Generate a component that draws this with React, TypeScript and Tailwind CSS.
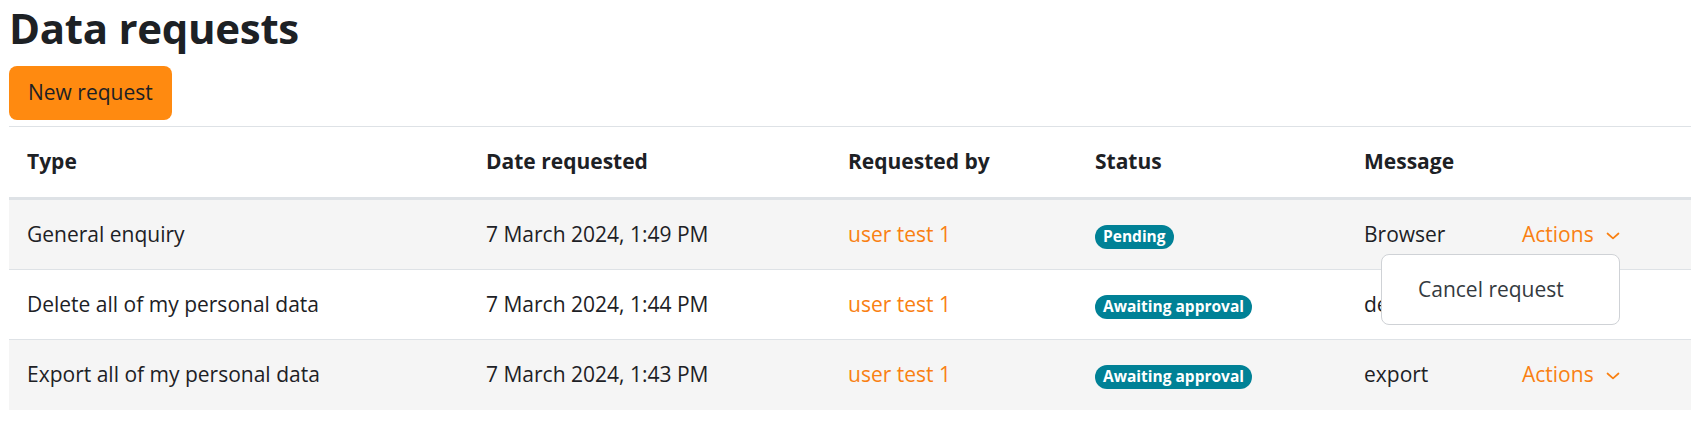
import React from "react";

const cols = "grid grid-cols-[459px_362px_247px_269px_158px_187px]";

function Chevron() {
  return (
    <svg width="14" height="8" viewBox="0 0 14 8" className="ml-[12px] mt-[2px]">
      <path d="M1.5 1.5 L7 6.3 L12.5 1.5" fill="none" stroke="#f98012" strokeWidth="1.7" strokeLinecap="round" strokeLinejoin="round" />
    </svg>
  );
}

function Badge({ text }: { text: string }) {
  return (
    <span className="inline-flex h-[24px] items-center rounded-full bg-[#008196] px-[8px] text-[15.5px] font-bold text-white leading-none">
      {text}
    </span>
  );
}

const rows = [
  { type: "General enquiry", date: "7 March 2024, 1:49 PM", status: "Pending", msg: "Browser", bg: "bg-[#f5f5f5]" },
  { type: "Delete all of my personal data", date: "7 March 2024, 1:44 PM", status: "Awaiting approval", msg: "delete", bg: "bg-white" },
  { type: "Export all of my personal data", date: "7 March 2024, 1:43 PM", status: "Awaiting approval", msg: "export", bg: "bg-[#f5f5f5]" },
];

export default function App() {
  return (
    <div className="min-h-[430px] bg-white px-[9px] text-[#1d2125]" style={{ fontFamily: '"Open Sans", "Noto Sans", sans-serif' }}>
      <h1 className="pt-0 text-[42px] font-bold leading-[56px] tracking-[-0.3px]">Data requests</h1>
      <div className="mt-[10px]">
        <button className="h-[54px] rounded-[8px] bg-[#ff8a10] px-[19px] text-[21px] text-[#1d2125]">New request</button>
      </div>
      <div className="relative mt-[6px] w-[1682px] border-t border-[#dee2e6]">
        <div className={`${cols} h-[73px] items-center border-b-[3px] border-[#dee2e6] text-[21px] font-bold`}>
          <div className="pl-[18px]">Type</div>
          <div className="pl-[18px]">Date requested</div>
          <div className="pl-[18px]">Requested by</div>
          <div className="pl-[18px]">Status</div>
          <div className="pl-[18px]">Message</div>
          <div></div>
        </div>
        {rows.map((r, i) => (
          <div key={i} className={`${cols} h-[70px] items-center text-[21px] ${r.bg} ${i < 2 ? "border-b border-[#dee2e6]" : ""}`}>
            <div className="pl-[18px]">{r.type}</div>
            <div className="pl-[18px]">{r.date}</div>
            <div className="pl-[18px] text-[#f98012]">user test 1</div>
            <div className="pl-[18px]"><Badge text={r.status} /></div>
            <div className="pl-[18px]">{r.msg}</div>
            <div className="flex items-center pl-[18px] text-[#f98012]">
              Actions
              <Chevron />
            </div>
          </div>
        ))}
        <div className="absolute left-[1372px] top-[127px] flex h-[71px] w-[239px] items-center rounded-[8px] border border-[#cfd2d6] bg-white pl-[36px] text-[21px] text-[#343a40]">
          Cancel request
        </div>
      </div>
    </div>
  );
}
